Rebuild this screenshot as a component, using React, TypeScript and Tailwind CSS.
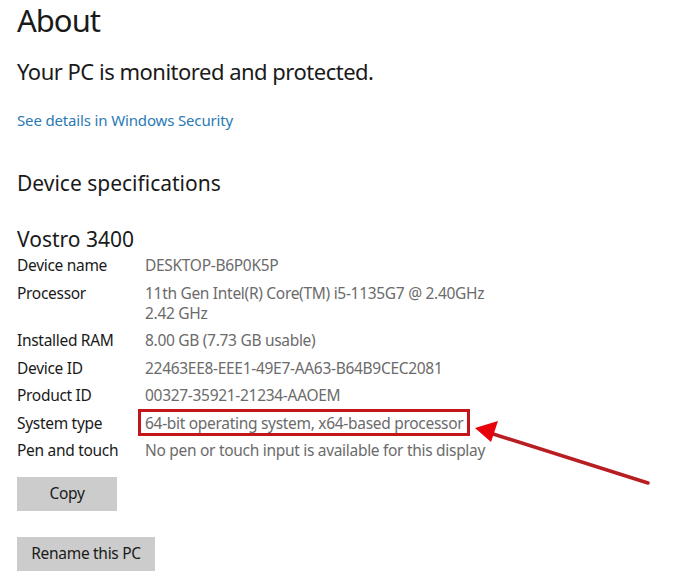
import React from 'react'

const specs: Array<{ label: string; value: string[] }> = [
  { label: 'Device name', value: ['DESKTOP-B6P0K5P'] },
  { label: 'Processor', value: ['11th Gen Intel(R) Core(TM) i5-1135G7 @ 2.40GHz', '2.42 GHz'] },
  { label: 'Installed RAM', value: ['8.00 GB (7.73 GB usable)'] },
  { label: 'Device ID', value: ['22463EE8-EEE1-49E7-AA63-B64B9CEC2081'] },
  { label: 'Product ID', value: ['00327-35921-21234-AAOEM'] },
  { label: 'System type', value: ['64-bit operating system, x64-based processor'] },
  { label: 'Pen and touch', value: ['No pen or touch input is available for this display'] },
]

export default function App() {
  return (
    <div className="relative w-[680px] h-[586px] overflow-hidden bg-white font-['Noto_Sans',sans-serif] text-[#1a1a1a]">
      <div className="flex flex-col px-[17px]">
        {/* Header */}
        <h1 className="text-[31px] leading-[40px] font-normal tracking-[-1px]">About</h1>
        <p className="mt-[16px] text-[22px] leading-[30px] tracking-[-0.5px]">Your PC is monitored and protected.</p>
        <a className="mt-[23px] text-[15px] leading-[22px] tracking-[-0.15px] text-[#2a7ab5]">See details in Windows Security</a>

        {/* Device specifications */}
        <h2 className="mt-[38px] text-[21px] leading-[28px]">Device specifications</h2>
        <h3 className="mt-[28px] text-[21px] leading-[28px]">Vostro 3400</h3>

        <div className="mt-[2px] flex flex-col gap-[7.5px] text-[15.5px] leading-[20px] tracking-[-0.3px]">
          {specs.map((row) => (
            <div key={row.label} className="grid grid-cols-[128px_1fr]">
              <span>{row.label}</span>
              <span className="relative text-[#6b6b6b]">
                {row.label === 'System type' && (
                  <span className="absolute left-[-7px] top-[-4px] bottom-[-3px] w-[332px] border-[3px] border-[#c2151c]" />
                )}
                {row.value.map((line) => (
                  <span key={line} className="block">{line}</span>
                ))}
              </span>
            </div>
          ))}
        </div>

        {/* Actions */}
        <div className="mt-[17px] flex flex-col items-start gap-[26px] text-[15.5px] tracking-[-0.3px]">
          <button className="w-[100px] h-[34px] bg-[#cccccc]">Copy</button>
          <button className="w-[138px] h-[34px] bg-[#cccccc]">Rename this PC</button>
        </div>
      </div>

      {/* Annotation arrow */}
      <svg className="absolute left-0 top-0 pointer-events-none" width="680" height="586">
        <line x1="490" y1="433" x2="648" y2="483" stroke="#b81d22" strokeWidth="3.5" strokeLinecap="round" />
        <polygon points="475,428 498,421 491,442" fill="#e8000b" />
      </svg>
    </div>
  )
}
